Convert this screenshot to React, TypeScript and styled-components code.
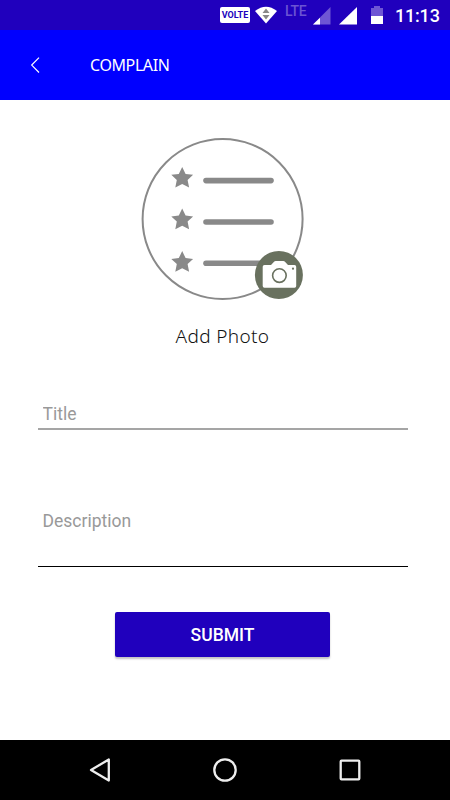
import React from "react";
import styled, { createGlobalStyle } from "styled-components";

const GlobalStyle = createGlobalStyle`
  * { box-sizing: border-box; }
  body { margin: 0; background: #fff; }
  svg { display: block; flex: none; }
`;

const Screen = styled.div`
  width: 450px;
  height: 800px;
  display: flex;
  flex-direction: column;
  overflow: hidden;
  background: #fff;
  font-family: Roboto, sans-serif;
`;

const StatusBar = styled.div`
  height: 30px;
  flex: none;
  display: flex;
  align-items: flex-start;
  padding-left: 220px;
  background: #2000bd;
  color: #fff;
`;

const VolteBadge = styled.div`
  width: 30px;
  height: 16px;
  margin: 7px 5px 0 0;
  border-radius: 2px;
  background: #fff;
  color: #2000bd;
  font: 700 9px/17px Roboto, sans-serif;
  text-align: center;
`;

const NetworkLabel = styled.span`
  width: 28px;
  margin: 3px 0 0 7px;
  font: 500 14px/17px Roboto, sans-serif;
  letter-spacing: -0.3px;
  color: #6b54d3;
`;

const StatusIcons = styled.svg`
  margin-top: 5px;
`;

const Clock = styled.time`
  margin: 5px 0 0 12px;
  font: 500 18px/22px Roboto, sans-serif;
  letter-spacing: -0.2px;
`;

const AppBar = styled.header`
  height: 70px;
  flex: none;
  display: flex;
  align-items: center;
  padding-left: 29px;
  background: #0000ff;
  color: #fff;
`;

const BackButton = styled.button`
  width: 61px;
  padding: 0;
  border: 0;
  background: none;
`;

const PageTitle = styled.h1`
  margin: 0 0 1px;
  font: 400 16px/20px "Noto Sans", sans-serif;
  letter-spacing: -0.4px;
`;

const Form = styled.main`
  flex: 1;
  display: flex;
  flex-direction: column;
  align-items: center;
  padding: 37px 42px 0 37px;
`;

const PhotoCaption = styled.div`
  margin-top: 22px;
  color: #111;
  font: 300 19px/26px "Noto Sans", sans-serif;
  letter-spacing: 0.35px;
`;

const Field = styled.input<{ $top: number; $height: number; $active?: boolean }>`
  width: 370px;
  height: ${(p) => p.$height}px;
  margin-top: ${(p) => p.$top}px;
  padding: ${(p) => (p.$active ? "0 5px 25px" : "2px 5px 0")};
  border: 0;
  border-bottom: ${(p) => (p.$active ? "1px solid #000" : "2px solid #a5a5a5")};
  border-radius: 0;
  outline: 0;
  font: 400 17.5px Roboto, sans-serif;
  &::placeholder { color: #999; opacity: 1; }
`;

const SubmitButton = styled.button`
  width: 215px;
  height: 45px;
  margin-top: 45px;
  padding: 1px 0 0;
  border: 0;
  border-radius: 2px;
  background: #2000bd;
  box-shadow: 0 2px 2px rgba(0, 0, 0, 0.24);
  color: #fff;
  font: 500 17.5px/22px Roboto, sans-serif;
`;

const NavBar = styled.nav`
  height: 60px;
  flex: none;
  display: flex;
  align-items: center;
  justify-content: space-between;
  padding: 0 88px;
  background: #000;
`;

const starPath =
  "M0 -11.2 L3.4 -4.2 L10.9 -3.4 L5.4 1.8 L6.9 9.4 L0 5.9 L-6.9 9.4 L-5.4 1.8 L-10.9 -3.4 L-3.4 -4.2Z";

const PhotoPicker = () => (
  <svg width="164" height="164" viewBox="141 137 164 164">
    <circle cx="222.6" cy="219" r="80" fill="none" stroke="#898989" strokeWidth="2" />
    {[178.2, 219.8, 262.3].map((y) => (
      <path key={y} d={starPath} transform={`translate(182.2 ${y})`} fill="#898989" />
    ))}
    {[180.6, 222, 263.3].map((y) => (
      <path key={y} d={`M206 ${y}H271`} stroke="#898989" strokeWidth="5.6" strokeLinecap="round" />
    ))}
    <circle cx="278.9" cy="275" r="24" fill="#69715f" />
    <path
      d="M264.5 265H271L274.3 261.5Q274.8 261 275.6 261H283.4Q284.2 261 284.7 261.5L288 265H294.5Q296.2 265 296.2 266.7V286Q296.2 287.7 294.5 287.7H264.5Q262.7 287.7 262.7 286V266.7Q262.7 265 264.5 265Z"
      fill="#fff"
    />
    <circle cx="279.4" cy="275.6" r="6.8" fill="none" stroke="#69715f" strokeWidth="1.6" />
    <circle cx="293" cy="268.7" r="1.1" fill="#69715f" />
  </svg>
);

export default function App() {
  return (
    <>
      <GlobalStyle />
      <Screen>
        <StatusBar>
          <VolteBadge>VOLTE</VolteBadge>
          <StatusIcons width="23" height="20" viewBox="255 5 23 20">
            <path d="M255 11Q266 2.5 277 11L266 23.5Z" fill="#fff" />
            <path d="M262.5 13L266 8.5L269.5 13ZM262.5 15L266 19.5L269.5 15Z" fill="#888" />
          </StatusIcons>
          <NetworkLabel>LTE</NetworkLabel>
          <StatusIcons width="70" height="20" viewBox="313 5 70 20">
            <path d="M313 24.5L330.5 7V24.5Z" fill="#6f56d4" />
            <path d="M313 24.5L320 17.7V24.5Z" fill="#fff" />
            <path d="M339 24.5L357 7V24.5Z" fill="#fff" />
            <path d="M371 8H374V6H380V8H383V16H371Z" fill="#6f56d4" />
            <path d="M371 16H383V24H371Z" fill="#fff" />
          </StatusIcons>
          <Clock>11:13</Clock>
        </StatusBar>
        <AppBar>
          <BackButton aria-label="Back">
            <svg width="12" height="18" viewBox="29 56 12 18">
              <path d="M39 57.7L31.7 65.1L39 72.5" fill="none" stroke="#fff" strokeWidth="1.2" />
            </svg>
          </BackButton>
          <PageTitle>COMPLAIN</PageTitle>
        </AppBar>
        <Form>
          <PhotoPicker />
          <PhotoCaption>Add Photo</PhotoCaption>
          <Field placeholder="Title" $top={49} $height={32} />
          <Field placeholder="Description" $top={70} $height={67} $active />
          <SubmitButton>SUBMIT</SubmitButton>
        </Form>
        <NavBar>
          <svg width="24" height="28" viewBox="88 756 24 28">
            <path d="M91 770L108.8 759.5V780.5Z" fill="none" stroke="#eee" strokeWidth="2.3" strokeLinejoin="round" />
          </svg>
          <svg width="26" height="26" viewBox="212 757 26 26">
            <circle cx="225" cy="770" r="10.7" fill="none" stroke="#eee" strokeWidth="2.3" />
          </svg>
          <svg width="24" height="24" viewBox="338 758 24 24">
            <rect x="340.7" y="760.7" width="18.6" height="18.6" rx="0.8" fill="none" stroke="#eee" strokeWidth="2.3" />
          </svg>
        </NavBar>
      </Screen>
    </>
  );
}
